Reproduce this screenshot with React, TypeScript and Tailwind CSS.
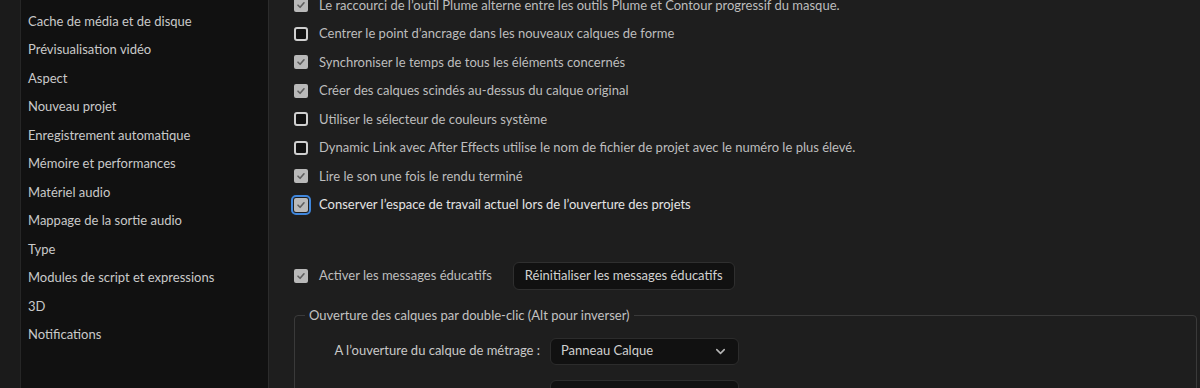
import { ChevronDown } from "lucide-react";

const sidebarItems = [
  "Cache de média et de disque",
  "Prévisualisation vidéo",
  "Aspect",
  "Nouveau projet",
  "Enregistrement automatique",
  "Mémoire et performances",
  "Matériel audio",
  "Mappage de la sortie audio",
  "Type",
  "Modules de script et expressions",
  "3D",
  "Notifications",
];

const options = [
  { label: "Le raccourci de l’outil Plume alterne entre les outils Plume et Contour progressif du masque.", checked: true },
  { label: "Centrer le point d’ancrage dans les nouveaux calques de forme", checked: false },
  { label: "Synchroniser le temps de tous les éléments concernés", checked: true },
  { label: "Créer des calques scindés au-dessus du calque original", checked: true },
  { label: "Utiliser le sélecteur de couleurs système", checked: false },
  { label: "Dynamic Link avec After Effects utilise le nom de fichier de projet avec le numéro le plus élevé.", checked: false },
  { label: "Lire le son une fois le rendu terminé", checked: true },
  { label: "Conserver l’espace de travail actuel lors de l’ouverture des projets", checked: true, focused: true },
];

function Checkbox({ checked, focused }: { checked: boolean; focused?: boolean }) {
  const box = checked ? (
    <div className="w-[14px] h-[14px] rounded-[2px] bg-[#b9b9b9] flex items-center justify-center">
      <svg width="10" height="10" viewBox="0 0 10 10" fill="none">
        <path d="M2 5.2 L4.1 7.3 L8 2.8" stroke="#5e5e5e" strokeWidth="1.6" strokeLinecap="round" strokeLinejoin="round" />
      </svg>
    </div>
  ) : (
    <div className="w-[14px] h-[14px] rounded-[3px] border-2 border-[#cfcfcf] bg-[#111]" />
  );
  if (focused) {
    return (
      <div className="rounded-[5px] border-2 border-[#3f86dc] p-[1px] -m-[3px]">{box}</div>
    );
  }
  return box;
}

export default function App() {
  return (
    <div
      className="w-[1200px] h-[388px] overflow-hidden flex bg-[#1e1e1e] text-[13px]"
      style={{ fontFamily: "Lato, 'Liberation Sans', sans-serif" }}
    >
      <div className="w-[21px] bg-[#1b1b1b] border-r border-[#262626]" />
      <div className="w-[248px] bg-[#111111] border-r border-[#2c2c2c] pt-[7px] pl-[7px]">
        {sidebarItems.map((item) => (
          <div key={item} className="h-[28.5px] flex items-center text-[#c9c9c9]">
            {item}
          </div>
        ))}
      </div>
      <div className="flex-1 pl-[25px] pr-[3px] -mt-[9px]">
        {options.map((o) => (
          <div key={o.label} className="h-[28.5px] flex items-center gap-[11px]">
            <Checkbox checked={o.checked} focused={o.focused} />
            <span className={o.focused ? "text-[#e4e4e4]" : "text-[#bdbdbd]"}>{o.label}</span>
          </div>
        ))}
        <div className="mt-[43px] flex items-center h-[28px]">
          <Checkbox checked />
          <span className="ml-[11px] text-[#bdbdbd]">Activer les messages éducatifs</span>
          <button className="ml-[21px] h-[28px] px-[11px] rounded-md bg-[#111] border border-[#2f2f2f] text-[#d2d2d2]">
            Réinitialiser les messages éducatifs
          </button>
        </div>
        <fieldset className="mt-[16px] border border-[#3a3a3a] rounded-[4px] h-[120px]">
          <legend className="ml-[10px] px-[4px] text-[#c2c2c2]">
            Ouverture des calques par double-clic (Alt pour inverser)
          </legend>
          <div className="pl-[36px]">
            <div className="mt-[12px] flex items-center gap-[10px]">
              <span className="w-[209px] text-right text-[#c9c9c9]">A l’ouverture du calque de métrage :</span>
              <div className="w-[189px] h-[27px] rounded-md bg-[#111] border border-[#2c2c2c] flex items-center justify-between pl-[10px] pr-[10px] text-[#cfcfcf]">
                <span>Panneau Calque</span>
                <ChevronDown size={15} strokeWidth={2.5} className="text-[#b5b5b5]" />
              </div>
            </div>
            <div className="mt-[15px] flex items-center gap-[10px]">
              <span className="w-[209px]" />
              <div className="w-[189px] h-[27px] rounded-md bg-[#111] border border-[#2c2c2c]" />
            </div>
          </div>
        </fieldset>
      </div>
    </div>
  );
}
